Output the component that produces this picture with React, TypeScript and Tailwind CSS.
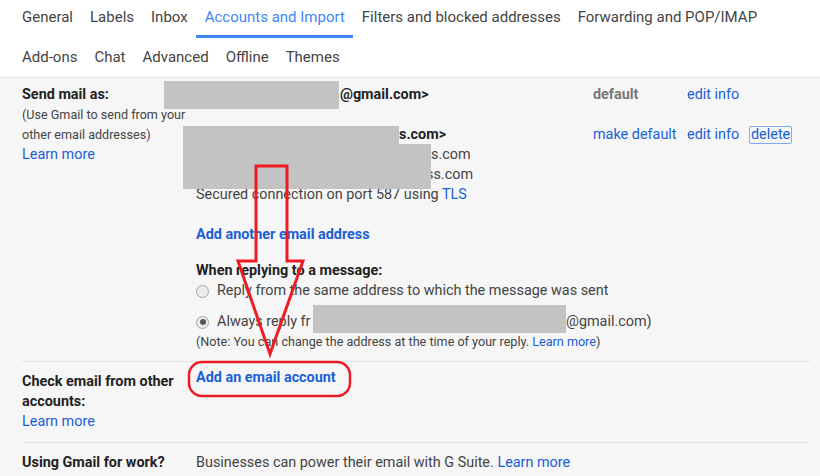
import React from 'react';

const topTabs = ['General', 'Labels', 'Inbox', 'Accounts and Import', 'Filters and blocked addresses', 'Forwarding and POP/IMAP'];
const bottomTabs = ['Add-ons', 'Chat', 'Advanced', 'Offline', 'Themes'];

function Tab({ label, active }: { label: string; active?: boolean }) {
    return (
        <div
            className={
                'h-full px-[8.5px] flex items-center text-[15px] border-b-[3px] ' +
                (active ? 'text-[#4285f4] border-[#4285f4]' : 'text-[#444] border-transparent')
            }
        >
            {label}
        </div>
    );
}

function Radio({ checked }: { checked?: boolean }) {
    return (
        <span className="w-[13px] h-[13px] rounded-full border border-[#a5a5a5] bg-[#ececec] flex items-center justify-center shrink-0">
            {checked && <span className="w-[6px] h-[6px] rounded-full bg-[#555]" />}
        </span>
    );
}

const link = 'text-[#1a5fd6]';

export default function App() {
    return (
        <div
            className="relative w-[820px] h-[476px] overflow-hidden bg-[#f6f6f6] text-[#222]"
            style={{ fontFamily: 'Roboto, "Liberation Sans", sans-serif' }}
        >
            {/* Tabs */}
            <div className="bg-white border-b border-[#e6e6e6] pl-[13.5px]">
                <div className="flex h-[38px]">
                    {topTabs.map((t) => (
                        <Tab key={t} label={t} active={t === 'Accounts and Import'} />
                    ))}
                </div>
                <div className="flex h-[39px] pt-[2px]">
                    {bottomTabs.map((t) => (
                        <Tab key={t} label={t} />
                    ))}
                </div>
            </div>

            <div className="pl-[22px] pr-[10px] leading-[20px] text-[14.4px]">
                {/* Send mail as */}
                <div className="flex pt-[7px] pb-[9px] border-b border-[#e2e2e2]">
                    <div className="w-[174px] shrink-0">
                        <div className="font-bold">Send mail as:</div>
                        <div className="text-[12.6px] text-[#444]">(Use Gmail to send from your</div>
                        <div className="text-[12.6px] text-[#444]">other email addresses)</div>
                        <div className={link}>Learn more</div>
                    </div>
                    <div className="flex-1">
                        <div className="flex h-[20px]">
                            <div className="w-[397px] font-bold whitespace-nowrap">
                                <span className="inline-block w-[144px]" />@gmail.com&gt;
                            </div>
                            <div className="w-[94px] font-bold text-[#777]">default</div>
                            <div className={link}>edit info</div>
                        </div>
                        <div className="h-[20px]" />
                        <div className="flex">
                            <div className="w-[397px] whitespace-nowrap">
                                <div className="font-bold">
                                    <span className="inline-block w-[203px]" />s.com&gt;
                                </div>
                                <div className="text-[#444]">
                                    <span className="inline-block w-[235px]" />s.com
                                </div>
                                <div className="text-[#444]">
                                    <span className="inline-block w-[230px]" />ss.com
                                </div>
                                <div className="text-[#444]">
                                    Secured connection on port 587 using <span className={link}>TLS</span>
                                </div>
                            </div>
                            <div className="w-[94px] h-[20px] whitespace-nowrap">
                                <span className={link}>make default</span>
                            </div>
                            <div className="flex h-[20px] items-center">
                                <span className={'w-[62px] ' + link}>edit info</span>
                                <span className={'border border-[#7fa9f4] rounded-[2px] px-[1px] leading-[16px] ' + link}>delete</span>
                            </div>
                        </div>
                        <div className={'mt-[20px] font-bold ' + link}>Add another email address</div>
                        <div className="mt-[16px] font-bold">When replying to a message:</div>
                        <div className="flex items-center gap-[8px] text-[#444]">
                            <Radio />
                            <span>Reply from the same address to which the message was sent</span>
                        </div>
                        <div className="flex items-center gap-[8px] mt-[11px] text-[#444] whitespace-nowrap">
                            <Radio checked />
                            <span>
                                <span className="inline-block w-[96px]">Always reply fr</span>
                                <span className="inline-block w-[253px]" />@gmail.com)
                            </span>
                        </div>
                        <div className="text-[12.6px] text-[#444]">
                            (Note: You can change the address at the time of your reply. <span className={link}>Learn more</span>)
                        </div>
                    </div>
                </div>

                {/* Check email */}
                <div className="flex pt-[10px] pb-[10px] border-b border-[#e2e2e2]">
                    <div className="w-[174px] shrink-0">
                        <div className="font-bold">Check email from other</div>
                        <div className="font-bold">accounts:</div>
                        <div className={link}>Learn more</div>
                    </div>
                    <div className={'-mt-[4px] font-bold ' + link}>Add an email account</div>
                </div>

                {/* Work */}
                <div className="flex pt-[10px]">
                    <div className="w-[174px] shrink-0 font-bold">Using Gmail for work?</div>
                    <div className="text-[#444]">
                        Businesses can power their email with G Suite. <span className={link}>Learn more</span>
                    </div>
                </div>
            </div>

            {/* Redactions */}
            <div className="absolute left-[164px] top-[81px] w-[175px] h-[28px] bg-[#c3c3c3]" />
            <div className="absolute left-[183px] top-[126px] w-[216px] h-[18px] bg-[#c3c3c3]" />
            <div className="absolute left-[183px] top-[144px] w-[248px] h-[45px] bg-[#c3c3c3]" />
            <div className="absolute left-[313px] top-[305px] w-[253px] h-[28px] bg-[#c3c3c3]" />

            {/* Annotations */}
            <svg className="absolute left-0 top-0" width="820" height="476" viewBox="0 0 820 476" fill="none">
                <polygon
                    points="256,166 287,166 287,261 303,261 270,354 238,261 256,261"
                    stroke="#ed1c24"
                    strokeWidth="3"
                    strokeLinejoin="miter"
                />
                <rect x="189" y="362" width="161" height="34" rx="13" stroke="#ed1c24" strokeWidth="2.5" />
            </svg>
        </div>
    );
}
